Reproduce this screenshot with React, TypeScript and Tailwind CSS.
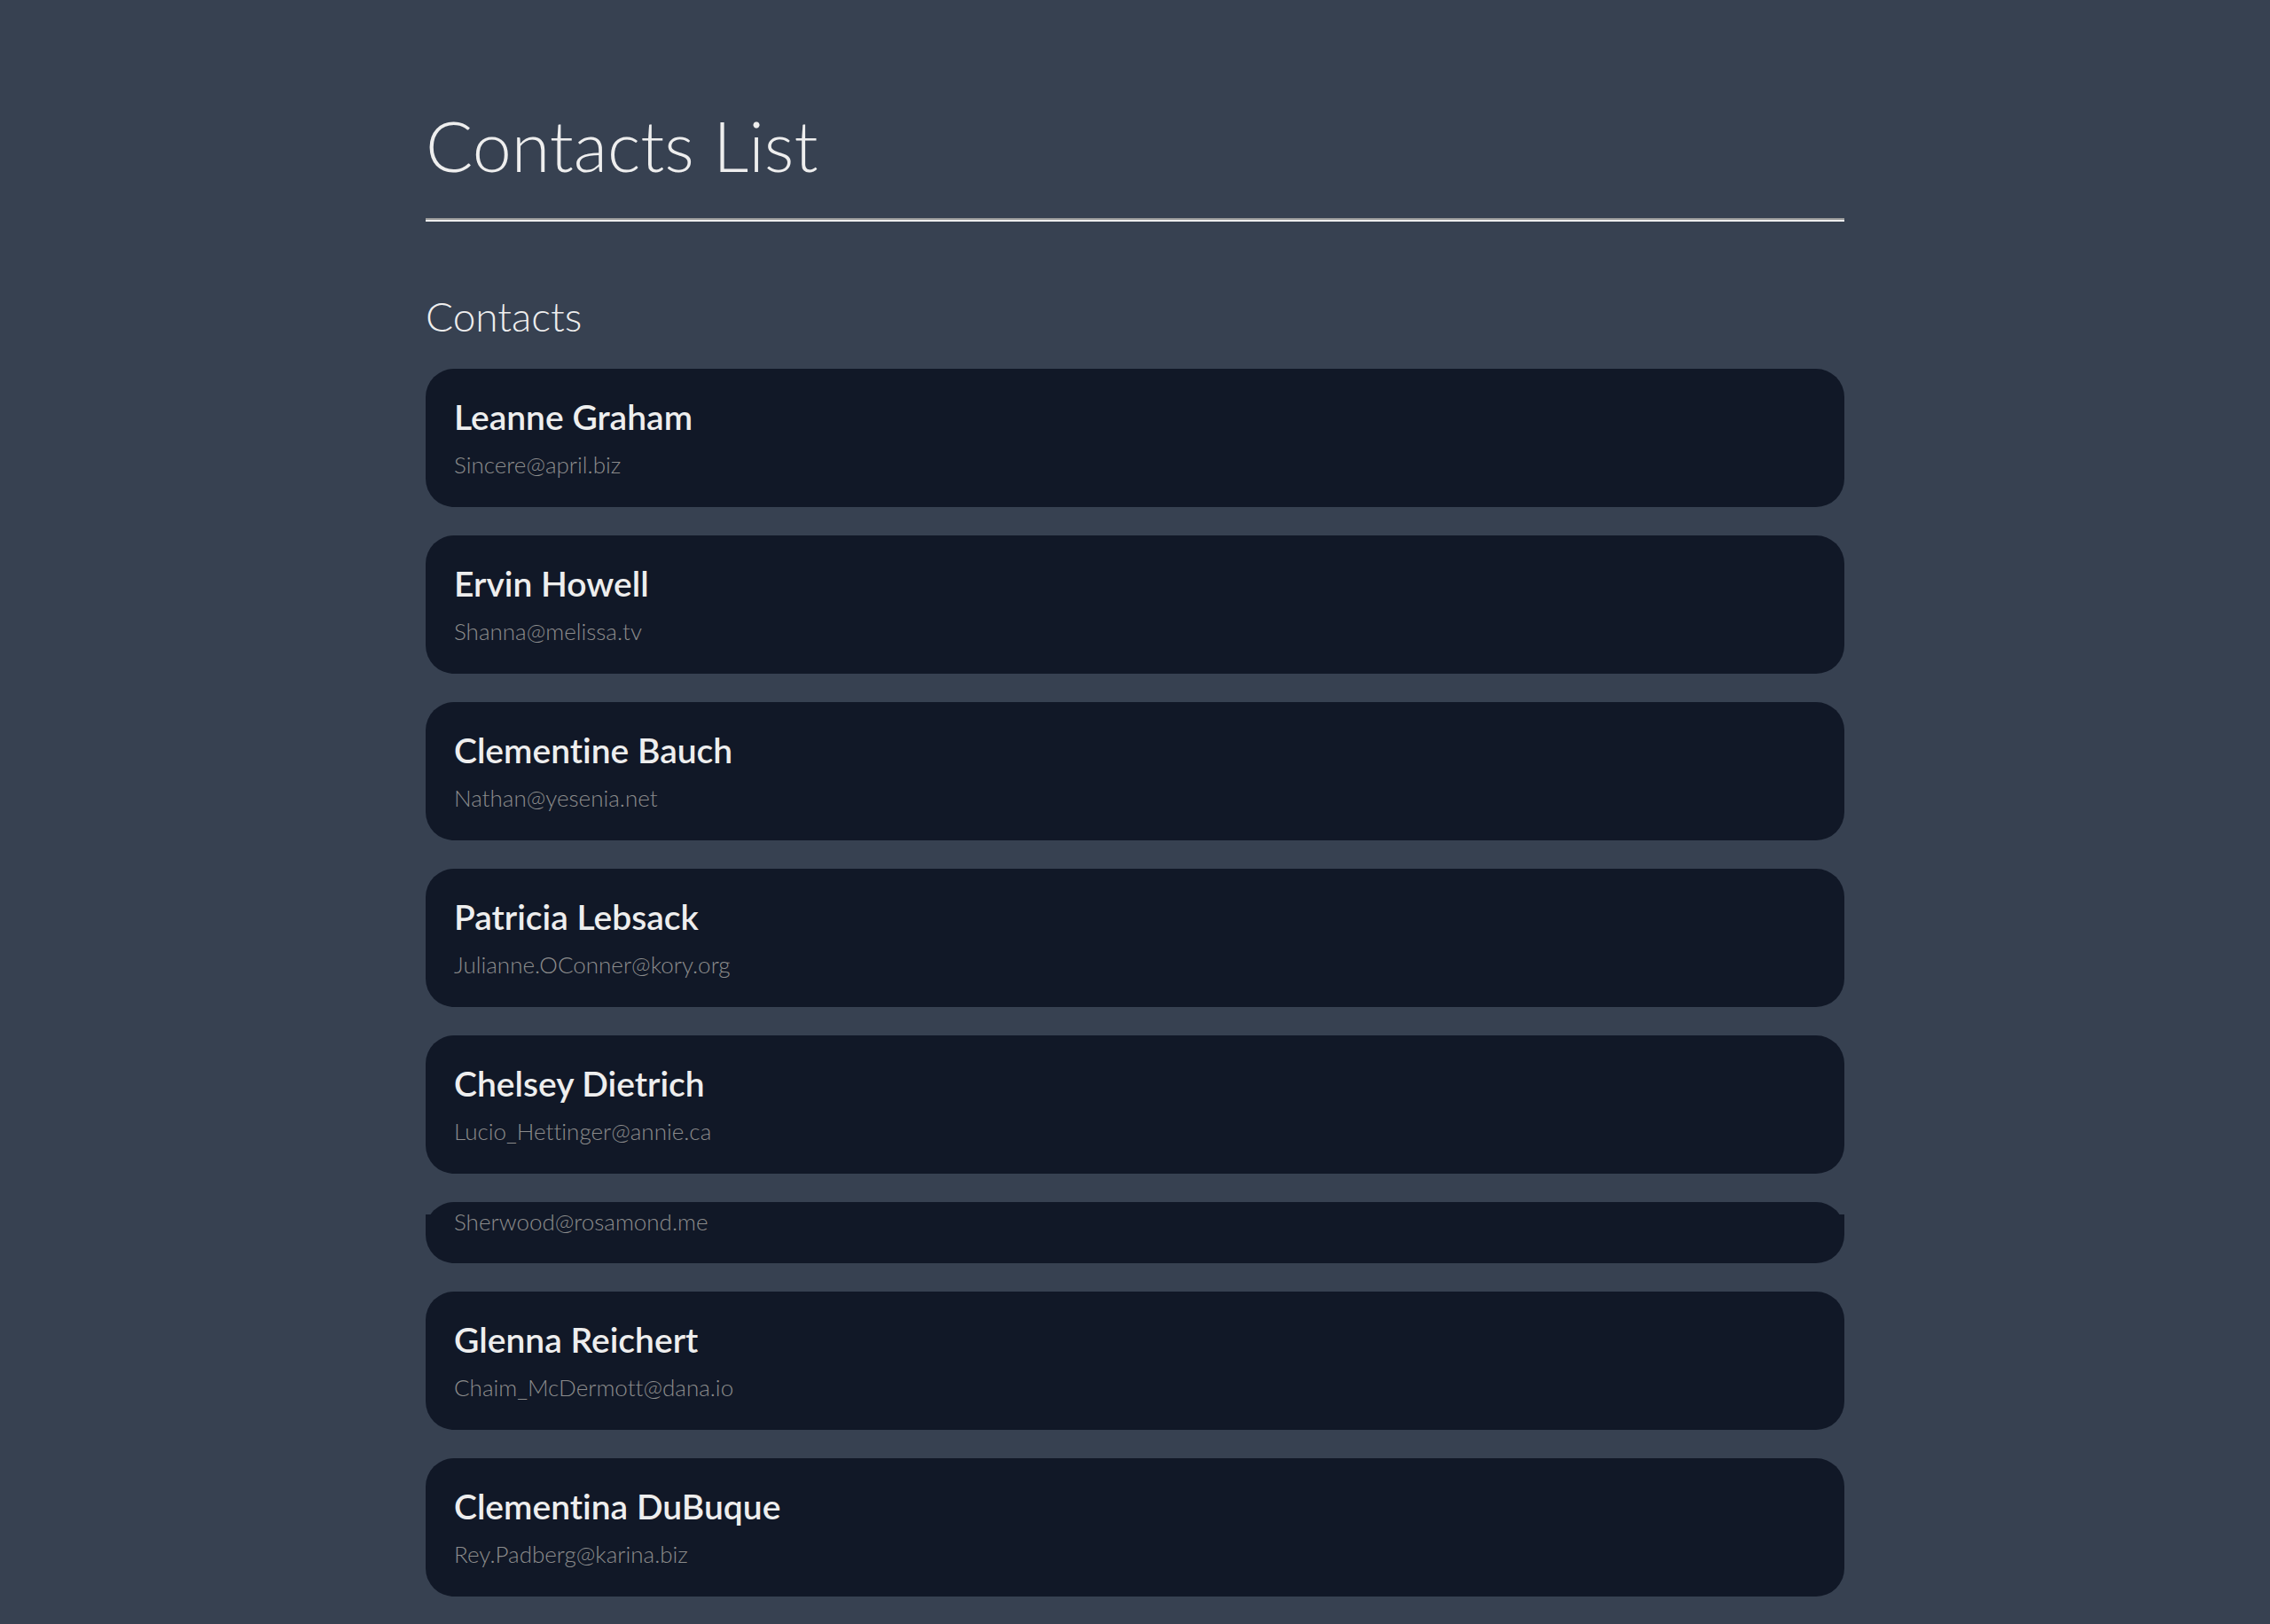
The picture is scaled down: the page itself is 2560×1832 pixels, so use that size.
type Contact = { name: string; email: string };

const firstContacts: Contact[] = [
  { name: "Leanne Graham", email: "Sincere@april.biz" },
  { name: "Ervin Howell", email: "Shanna@melissa.tv" },
  { name: "Clementine Bauch", email: "Nathan@yesenia.net" },
  { name: "Patricia Lebsack", email: "Julianne.OConner@kory.org" },
  { name: "Chelsey Dietrich", email: "Lucio_Hettinger@annie.ca" },
];
const lastContacts: Contact[] = [
  { name: "Glenna Reichert", email: "Chaim_McDermott@dana.io" },
  { name: "Clementina DuBuque", email: "Rey.Padberg@karina.biz" },
];

function Card({ name, email }: Contact) {
  return (
    <li className="rounded-[32px] bg-[#111827] p-8">
      <h3 className="text-[39px] leading-[44px] font-semibold text-[#eeeeee]">{name}</h3>
      <p className="mt-4 text-[26px] leading-8 font-light text-[#8c8c8c]">{email}</p>
    </li>
  );
}

// A card folded down to its top edge and its email line.
function FoldedCard({ email }: { email: string }) {
  return (
    <li>
      <div className="h-[14px] overflow-hidden">
        <div className="h-16 rounded-t-[32px] bg-[#111827]" />
      </div>
      <div className="h-[55px] overflow-hidden rounded-b-[32px] bg-[#111827] px-8">
        <p className="-mt-2 text-[26px] leading-8 font-light text-[#8c8c8c]">{email}</p>
      </div>
    </li>
  );
}

export default function App() {
  return (
    <main className="min-h-screen bg-[#374151] px-8 pt-[122px] pb-8 font-['Lato','Liberation_Sans',sans-serif] text-[#eeeeee] [font-variant-ligatures:none]">
      <div className="mx-auto w-full max-w-[1600px]">
        <h1 className="text-[79px] leading-[84px] font-light">Contacts List</h1>
        <hr className="mt-10 border-t-2 border-b-2 border-t-[#9a9a9a] border-b-[#eeeeee]" />
        <section>
          <h2 className="mt-20 mb-8 text-[46px] leading-[54px] font-light">Contacts</h2>
          <ul className="flex flex-col gap-8">
            {firstContacts.map((c) => (
              <Card key={c.email} {...c} />
            ))}
            <FoldedCard email="Sherwood@rosamond.me" />
            {lastContacts.map((c) => (
              <Card key={c.email} {...c} />
            ))}
          </ul>
        </section>
      </div>
    </main>
  );
}
